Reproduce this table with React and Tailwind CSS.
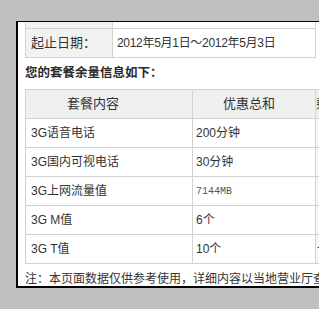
import React from "react";

const rows = [
  { name: "3G语音电话", total: "200分钟", rest: "" },
  { name: "3G国内可视电话", total: "30分钟", rest: "" },
  { name: "3G上网流量值", total: "7144MB", rest: "", mono: true },
  { name: "3G M值", total: "6个", rest: "" },
  { name: "3G T值", total: "10个", rest: "十" },
];

export default function App() {
  return (
    <div
      className="w-[319px] h-[309px] overflow-hidden bg-[#c0c0c0] pt-[21px] pl-[16px] text-[12px] text-[#333]"
      style={{ fontFamily: '"Liberation Sans", "Noto Sans CJK SC", sans-serif' }}
    >
      <div className="w-[340px] h-[267px] bg-white border-t border-l-2 border-b-2 border-black overflow-hidden pl-[7px]">
        {/* date table, scrolled so the first row is cut */}
        <div className="w-[291px] border-l border-r border-[#d2d2d2]">
          <div className="grid grid-cols-[87px_1fr] h-[7px] border-b border-[#d2d2d2]">
            <div className="bg-[#f2f2f2] border-r border-[#d2d2d2]" />
            <div />
          </div>
          <div className="grid grid-cols-[87px_1fr] h-[29px] border-b border-[#d2d2d2]">
            <div className="bg-[#f2f2f2] border-r border-[#d2d2d2] flex items-center pl-[5px] text-[13px]">
              起止日期：
            </div>
            <div className="flex items-center pl-[4px] tracking-[-0.3px]">2012年5月1日～2012年5月3日</div>
          </div>
        </div>

        <div className="h-[31px] flex items-center font-bold text-[12.5px] text-[#2a2a2a]">
          您的套餐余量信息如下：
        </div>

        {/* package table */}
        <div className="w-[340px] border-t border-l border-[#d2d2d2]">
          <div className="grid grid-cols-[167px_123px_1fr] h-[29px] border-b border-[#d2d2d2] bg-[#f0f0f0] text-[13px]">
            <div className="border-r border-[#d2d2d2] flex items-center pl-[41px]">套餐内容</div>
            <div className="border-r border-[#d2d2d2] flex items-center pl-[30px]">优惠总和</div>
            <div className="flex items-center">剩余量</div>
          </div>
          {rows.map((r) => (
            <div
              key={r.name}
              className="grid grid-cols-[167px_123px_1fr] h-[29px] border-b border-[#d2d2d2]"
            >
              <div className="border-r border-[#d2d2d2] flex items-center pl-[5px]">{r.name}</div>
              <div className="border-r border-[#d2d2d2] flex items-center pl-[3px]">
                {r.mono ? (
                  <span
                    className="text-[10px] text-[#555]"
                    style={{ fontFamily: '"Liberation Mono", monospace' }}
                  >
                    {r.total}
                  </span>
                ) : (
                  r.total
                )}
              </div>
              <div className="bg-[#f8f8f8] flex items-center pl-[1px]">{r.rest}</div>
            </div>
          ))}
        </div>

        <div className="pt-[8px] leading-[14px] whitespace-nowrap">
          注：本页面数据仅供参考使用，详细内容以当地营业厅查询为准。
        </div>
      </div>
    </div>
  );
}
